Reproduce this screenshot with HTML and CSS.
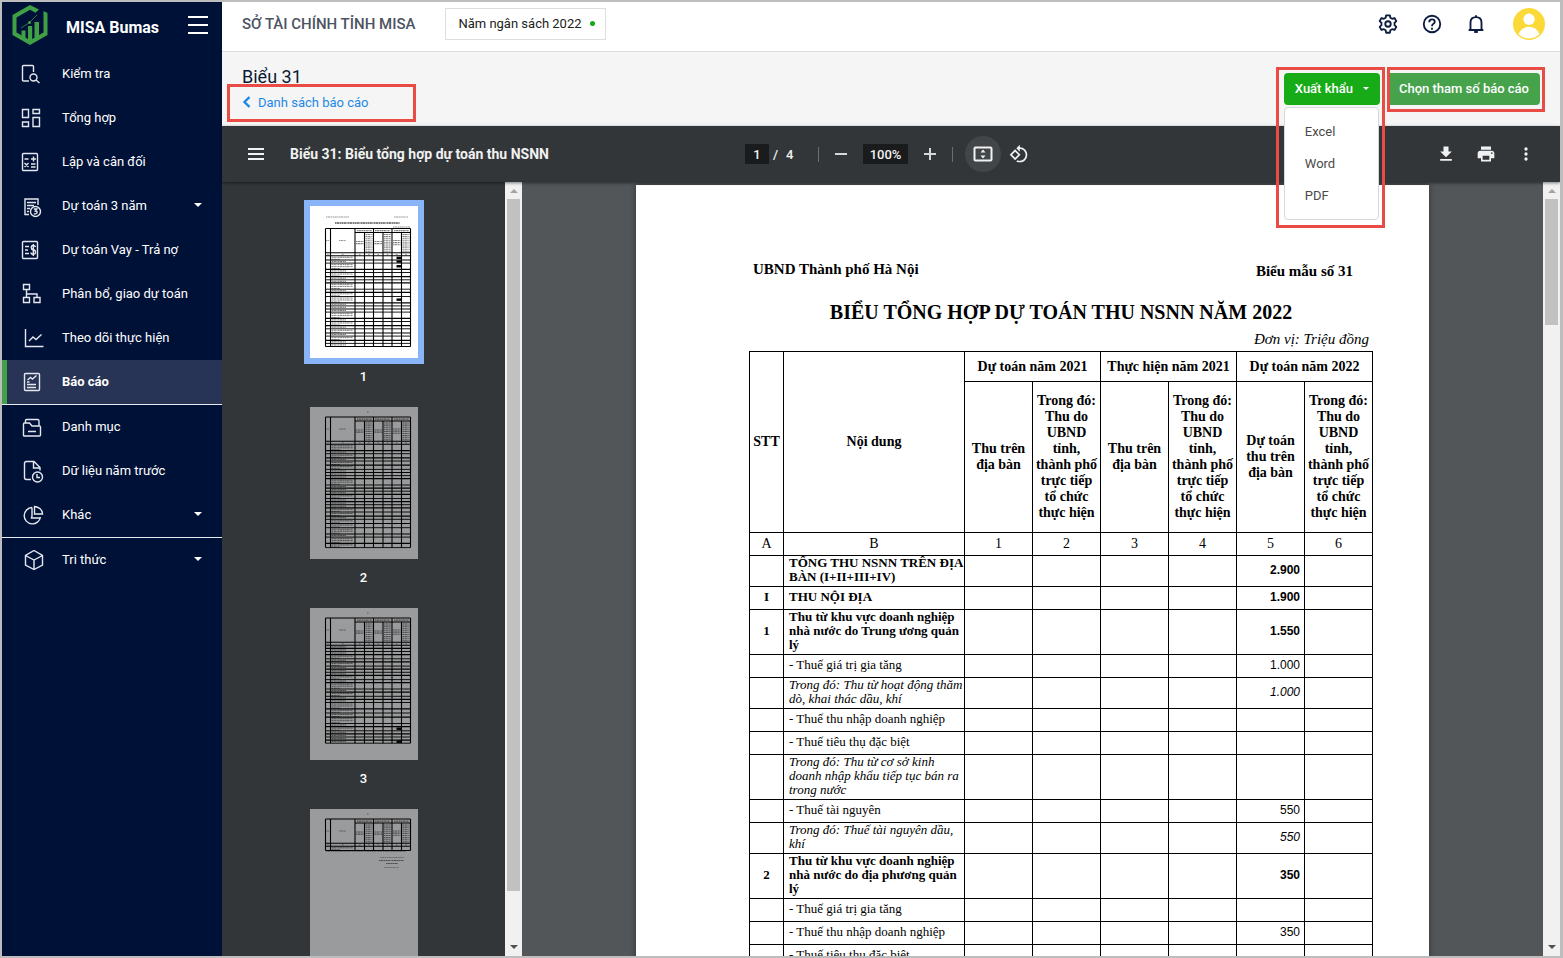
FILE: index.html
```html
<!DOCTYPE html>
<html lang="vi">
<head>
<meta charset="utf-8">
<title>MISA Bumas - Biểu 31</title>
<link rel="stylesheet" href="styles.css">
</head>
<body>
<div class="app">
  <aside class="sidebar">
    <div class="brand">
      <svg class="brand-logo" viewBox="0 0 36 40" width="36" height="40">
        <path d="M27 4.500 18 0 .5 10v20L18 40l17.500-10V8l-4 -2v21.500L18 35.300 4.500 27.500v-15L18 4.800l5.500 3z" fill="#3fa046"/>
        <path d="M9.500 25.500h4v8l-4-2.300zM16 21h4.200v14.500L18 37l-2-1.500zM22.500 17h4.500v14l-4.500 2.500z" fill="#3fa046"/>
        <path d="M9 23l8.500-5.500L25 10" fill="none" stroke="#2c7440" stroke-width="1"/>
        <circle cx="17.500" cy="17.500" r="1.500" fill="#3fa046"/>
      </svg>
      <span class="brand-name">MISA Bumas</span>
      <button class="icon-btn brand-menu" aria-label="Thu gọn"><svg viewBox="0 0 20 18" width="20" height="18"><path d="M0 1h20M0 9h20M0 17h20" stroke="#fff" stroke-width="2"/></svg></button>
    </div>
    <nav>
      <ul class="nav-group">
        <li><a class="nav-item" href="#"><svg viewBox="0 0 24 24"><path d="M10 19H4.500q-1 0-1-1V4.500q0-1 1-1h9q1 0 1 1V10"/><circle cx="14.500" cy="15.500" r="3.500"/><path d="M17 18l3.500 3"/></svg><span>Kiểm tra</span></a></li>
        <li><a class="nav-item" href="#"><svg viewBox="0 0 24 24"><path d="M3.500 3.500h6v8h-6zM14 3.500h6.500v4H14zM3.500 16h6v4.500h-6zM14 11.500h6.500v9H14z"/></svg><span>Tổng hợp</span></a></li>
        <li><a class="nav-item" href="#"><svg viewBox="0 0 24 24"><rect x="3.500" y="3.500" width="15" height="17" rx="1"/><path d="M5.500 9h4M12 9h5M14.500 6.500v5M5.500 13l4 4M9.500 13l-4 4M12 14h4.500M12 17h4.500"/></svg><span>Lập và cân đối</span></a></li>
        <li><a class="nav-item" href="#"><svg viewBox="0 0 24 24"><path d="M10 20.500H6V5h13v6M8 8.500h9M8 11.500h7M8 14.500h3M8 17.500h2"/><circle cx="16.500" cy="17.500" r="5"/><path d="M14.800 15h3l-1.500 2q2 0 1.800 1.500t-3.300 1.500"/></svg><span>Dự toán 3 năm</span><i class="caret"></i></a></li>
        <li><a class="nav-item" href="#"><svg viewBox="0 0 24 24"><rect x="3.500" y="3.500" width="15" height="17" rx="1"/><path d="M6 8.500h4M6 12h3M6 15.500h4M16.500 9q-.5-1.500-2.300-1.500-2 0-2 2t2 2.300q2.300.2 2.300 2.400t-2.300 2.100Q12 16.300 12 14.500M14.300 6v12"/></svg><span>Dự toán Vay - Trả nợ</span></a></li>
        <li><a class="nav-item" href="#"><svg viewBox="0 0 24 24"><path d="M4.500 2.500h6v5h-6zM4.500 15.500h6v5h-6zM15 15.500h6v5h-6zM7.500 7.500v8M7.500 12H18v3.500"/></svg><span>Phân bổ, giao dự toán</span></a></li>
        <li><a class="nav-item" href="#"><svg viewBox="0 0 24 24"><path d="M6.500 3v17.500h18M10 15l4-4 3 2.500 5.500-5"/></svg><span>Theo dõi thực hiện</span></a></li>
        <li><a class="nav-item active" href="#"><svg viewBox="0 0 24 24"><rect x="5.500" y="3.500" width="15" height="17" rx="1"/><path d="M8 12h2.500M8 14.500h9M8 17.500h9M8.500 10l3-2.500 2 1.500 4-3.500"/></svg><span>Báo cáo</span></a></li>
      </ul>
      <ul class="nav-group">
        <li><a class="nav-item" href="#"><svg viewBox="0 0 24 24"><path d="M6.500 8V5.500q0-1 1-1h11q1.500 0 1.500 1.500v5M4.500 20.500V9q0-1 1-1h5l2.500 3h7.500q1 0 1 1v8q0 1-1 1h-15q-1 0-1-.5zM9 16.500h8"/></svg><span>Danh mục</span></a></li>
        <li><a class="nav-item" href="#"><svg viewBox="0 0 24 24"><path d="M12 20.500H7.500q-2 0-2-2v-14q0-2 2-2H15l6 6v3M14.500 3v6H21"/><circle cx="18.500" cy="18" r="5"/><path d="M18 15v3.500h3"/></svg><span>Dữ liệu năm trước</span></a></li>
        <li><a class="nav-item" href="#"><svg viewBox="0 0 24 24"><path d="M13 4.500A8.200 8.200 0 1 0 21.500 14M13 4.500V13l-.5 2h9M15.500 3.500V11h8Q23 4.500 15.500 3.500z"/></svg><span>Khác</span><i class="caret"></i></a></li>
      </ul>
      <ul class="nav-group">
        <li><a class="nav-item" href="#"><svg viewBox="0 0 24 24"><path d="M15 2.500l8.500 5v9.500L15 21.500 6.500 17V7.500zM6.500 7.500L15 12l8.500-4.500M15 12v9.500"/></svg><span>Tri thức</span><i class="caret"></i></a></li>
      </ul>
    </nav>
  </aside>

  <main class="main">
    <header class="topbar">
      <span class="org">SỞ TÀI CHÍNH TỈNH MISA</span>
      <button class="year">Năm ngân sách 2022<i class="dot"></i></button>
      <div class="topbar-tools">
        <button class="icon-btn" aria-label="Thiết lập"><svg viewBox="0 0 24 24" width="22" height="22" fill="none" stroke="#0b1a40" stroke-width="2" stroke-linejoin="round"><path d="M10 2.500h4l.6 2.700 1.900 1.100 2.600-.8 2 3.400-2 1.900v2.400l2 1.900-2 3.400-2.600-.8-1.900 1.100-.6 2.700h-4l-.6-2.700-1.900-1.100-2.600.8-2-3.400 2-1.900v-2.400l-2-1.900 2-3.400 2.600.8 1.900-1.100z"/><circle cx="12" cy="12" r="3"/></svg></button>
        <button class="icon-btn" aria-label="Trợ giúp"><svg viewBox="0 0 24 24" width="22" height="22" fill="none" stroke="#0b1a40" stroke-width="2"><circle cx="12" cy="12" r="9"/><path d="M9 10q0-3 3-3t3 2.600q0 1.500-1.700 2.400-1.300.8-1.300 2.500"/><path d="M12 16v2.200"/></svg></button>
        <button class="icon-btn" aria-label="Thông báo"><svg viewBox="0 0 24 24" width="22" height="22" fill="none" stroke="#0b1a40" stroke-width="2"><path d="M4 18.500h16M6 18.500V10.500q0-6 6-6t6 6v8M12 2.500v2"/><path d="M10 20.500h4" stroke-width="2.500"/></svg></button>
        <button class="icon-btn avatar" aria-label="Tài khoản"><svg viewBox="0 0 32 32" width="32" height="32"><circle cx="16" cy="16" r="16" fill="#fad938"/><circle cx="16" cy="11.300" r="5.700" fill="#fff"/><path d="M5.500 26Q9 18.800 16 18.800T26.500 26Q22 30.500 16 30.500T5.500 26z" fill="#fff"/></svg></button>
      </div>
    </header>

    <section class="report-bar">
      <div class="report-title">
        <h1>Biểu 31</h1>
        <a class="back" href="#"><svg viewBox="0 0 9 12" width="9" height="12"><path d="M7.500 1l-5 5 5 5" fill="none" stroke="#1e88e5" stroke-width="2.400"/></svg>Danh sách báo cáo</a>
      </div>
      <div class="report-actions">
        <div class="export marked">
          <button class="btn btn-export">Xuất khẩu<i class="caret small"></i></button>
          <div class="menu">
            <button>Excel</button>
            <button>Word</button>
            <button>PDF</button>
          </div>
        </div>
        <div class="marked params"><button class="btn btn-params">Chọn tham số báo cáo</button></div>
      </div>
    </section>

    <section class="viewer">
      <div class="toolbar">
        <div class="tb-left">
          <button class="icon-btn" aria-label="Trình đơn"><svg viewBox="0 0 16 12" width="16" height="12"><path d="M0 1h16M0 6h16M0 11h16" stroke="#f1f1f1" stroke-width="2"/></svg></button>
          <span class="doc-name">Biểu 31: Biểu tổng hợp dự toán thu NSNN</span>
        </div>
        <div class="tb-center">
          <input class="field page-no" value="1" aria-label="Trang"><div class="pages"><span>/</span><span>4</span></div>
          <i class="sep"></i>
          <button class="icon-btn zoom" aria-label="Thu nhỏ"><svg viewBox="0 0 12 12" width="12" height="12"><path d="M0 6h12" stroke="#d8d8d8" stroke-width="2"/></svg></button>
          <input class="field zoom-level" value="100%" aria-label="Thu phóng">
          <button class="icon-btn zoom" aria-label="Phóng to"><svg viewBox="0 0 12 12" width="12" height="12"><path d="M0 6h12M6 0v12" stroke="#d8d8d8" stroke-width="2"/></svg></button>
          <i class="sep"></i>
          <button class="icon-btn fit" aria-label="Vừa trang"><svg viewBox="0 0 20 16" width="20" height="16"><rect x="1.500" y="1.500" width="17" height="13" rx="1" fill="none" stroke="#f1f1f1" stroke-width="2"/><path d="M10 3.500l2.500 3h-5zM10 12.500l2.500-3h-5z" fill="#f1f1f1"/></svg></button>
          <button class="icon-btn rotate" aria-label="Xoay"><svg viewBox="0 0 24 24" width="20" height="20" fill="#f1f1f1"><path d="M7.340 6.410L.86 12.900l6.490 6.480 6.490-6.480-6.500-6.490zM3.690 12.900l3.660-3.660L11 12.900l-3.660 3.660-3.650-3.660zm15.670-6.260A8.950 8.950 0 0 0 13 4V.76L8.760 5 13 9.240V6c1.790 0 3.580.68 4.950 2.050a7.007 7.007 0 0 1 0 9.900 6.973 6.973 0 0 1-7.790 1.440l-1.490 1.490C10.020 21.620 11.510 22 13 22c2.300 0 4.610-.88 6.360-2.640a8.980 8.980 0 0 0 0-12.720z"/></svg></button>
        </div>
        <div class="tb-right">
          <button class="icon-btn" aria-label="Tải xuống"><svg viewBox="0 0 24 24" width="20" height="20" fill="#f1f1f1"><path d="M19 9h-4V3H9v6H5l7 7 7-7zM5 18v2h14v-2H5z"/></svg></button>
          <button class="icon-btn" aria-label="In"><svg viewBox="0 0 24 24" width="20" height="20" fill="#f1f1f1"><path d="M19 8H5c-1.660 0-3 1.340-3 3v6h4v4h12v-4h4v-6c0-1.660-1.340-3-3-3zm-3 11H8v-5h8v5zm3-7c-.55 0-1-.45-1-1s.45-1 1-1 1 .45 1 1-.45 1-1 1zm-1-9H6v4h12V3z"/></svg></button>
          <button class="icon-btn" aria-label="Thêm"><svg viewBox="0 0 24 24" width="20" height="20" fill="#f1f1f1"><circle cx="12" cy="6" r="2"/><circle cx="12" cy="12" r="2"/><circle cx="12" cy="18" r="2"/></svg></button>
        </div>
      </div>

      <div class="panes">
        <div class="thumbs">
          <div class="thumb"><button class="thumb-page selected" data-page="1" aria-label="Trang 1"></button><span>1</span></div>
          <div class="thumb"><button class="thumb-page" data-page="2" aria-label="Trang 2"></button><span>2</span></div>
          <div class="thumb"><button class="thumb-page" data-page="3" aria-label="Trang 3"></button><span>3</span></div>
          <div class="thumb"><button class="thumb-page" data-page="4" aria-label="Trang 4"></button></div>
        </div>
        <div class="scroll"><i class="up"></i><div class="track"><div class="handle long"></div></div><i class="down"></i></div>

        <div class="doc">
          <article class="sheet">
            <div class="sheet-head"><span>UBND Thành phố Hà Nội</span><span class="form-no">Biểu mẫu số 31</span></div>
            <h2>BIỂU TỔNG HỢP DỰ TOÁN THU NSNN NĂM 2022</h2>
            <p class="unit">Đơn vị: Triệu đồng</p>
            <table>
              <colgroup><col class="c-no"><col class="c-name"><col span="6" class="c-val"></colgroup>
              <thead>
                <tr class="h1"><th rowspan="2">STT</th><th rowspan="2">Nội dung</th><th colspan="2">Dự toán năm 2021</th><th colspan="2">Thực hiện năm 2021</th><th colspan="2">Dự toán năm 2022</th></tr>
                <tr class="h2"><th>Thu trên địa bàn</th><th>Trong đó: Thu do UBND tỉnh, thành phố trực tiếp tổ chức thực hiện</th><th>Thu trên địa bàn</th><th>Trong đó: Thu do UBND tỉnh, thành phố trực tiếp tổ chức thực hiện</th><th>Dự toán thu trên địa bàn</th><th>Trong đó: Thu do UBND tỉnh, thành phố trực tiếp tổ chức thực hiện</th></tr>
                <tr class="idx"><td>A</td><td>B</td><td>1</td><td>2</td><td>3</td><td>4</td><td>5</td><td>6</td></tr>
              </thead>
              <tbody>
                <tr class="b"><td></td><td>TỔNG THU NSNN TRÊN ĐỊA BÀN (I+II+III+IV)</td><td></td><td></td><td></td><td></td><td>2.900</td><td></td></tr>
                <tr class="b"><td>I</td><td>THU NỘI ĐỊA</td><td></td><td></td><td></td><td></td><td>1.900</td><td></td></tr>
                <tr class="b"><td>1</td><td>Thu từ khu vực doanh nghiệp nhà nước do Trung ương quản lý</td><td></td><td></td><td></td><td></td><td>1.550</td><td></td></tr>
                <tr><td></td><td>- Thuế giá trị gia tăng</td><td></td><td></td><td></td><td></td><td>1.000</td><td></td></tr>
                <tr class="i"><td></td><td>Trong đó: Thu từ hoạt động thăm dò, khai thác dầu, khí</td><td></td><td></td><td></td><td></td><td>1.000</td><td></td></tr>
                <tr><td></td><td>- Thuế thu nhập doanh nghiệp</td><td></td><td></td><td></td><td></td><td></td><td></td></tr>
                <tr><td></td><td>- Thuế tiêu thụ đặc biệt</td><td></td><td></td><td></td><td></td><td></td><td></td></tr>
                <tr class="i"><td></td><td>Trong đó: Thu từ cơ sở kinh doanh nhập khẩu tiếp tục bán ra trong nước</td><td></td><td></td><td></td><td></td><td></td><td></td></tr>
                <tr><td></td><td>- Thuế tài nguyên</td><td></td><td></td><td></td><td></td><td>550</td><td></td></tr>
                <tr class="i"><td></td><td>Trong đó: Thuế tài nguyên dầu, khí</td><td></td><td></td><td></td><td></td><td>550</td><td></td></tr>
                <tr class="b"><td>2</td><td>Thu từ khu vực doanh nghiệp nhà nước do địa phương quản lý</td><td></td><td></td><td></td><td></td><td>350</td><td></td></tr>
                <tr><td></td><td>- Thuế giá trị gia tăng</td><td></td><td></td><td></td><td></td><td></td><td></td></tr>
                <tr><td></td><td>- Thuế thu nhập doanh nghiệp</td><td></td><td></td><td></td><td></td><td>350</td><td></td></tr>
                <tr><td></td><td>- Thuế tiêu thụ đặc biệt</td><td></td><td></td><td></td><td></td><td></td><td></td></tr>
              </tbody>
            </table>
          </article>
        </div>
        <div class="scroll"><i class="up"></i><div class="track"><div class="handle short"></div></div><i class="down"></i></div>
      </div>
    </section>
  </main>
</div>
<script src="thumbs.js"></script>
</body>
</html>
```
FILE: styles.css
```css
*, *::before, *::after { box-sizing: border-box; }
body { margin: 0; font-family: Roboto, "Noto Sans", sans-serif; font-size: 13px; color: #111; }
ul { list-style: none; margin: 0; padding: 0; }
button, input { font: inherit; color: inherit; }
button { cursor: pointer; }
.icon-btn { display: flex; align-items: center; justify-content: center; border: 0; padding: 0; background: none; }
.app { display: flex; height: 100vh; border: 2px solid #bdbdbd; border-right-width: 3px; overflow: hidden; }

/* Sidebar */
.sidebar { flex: 0 0 220px; background: #001137; color: #fff; }
.brand { display: flex; align-items: center; height: 50px; padding: 0 14px 4px 10px; }
.brand-name { flex: 1; padding: 5px 0 0 18px; font-size: 16px; font-weight: 700; }
.nav-group + .nav-group { border-top: 1px solid #e8eaf0; }
.nav-item { display: flex; align-items: center; height: 44px; padding: 0 20px 0 17px; color: #fff; text-decoration: none; }
.nav-item svg { width: 24px; height: 24px; margin-right: 19px; overflow: visible; fill: none; stroke: #e4e7ee; stroke-width: 1.4; }
.nav-item span { flex: 1; padding-bottom: 2px; }
.nav-item .caret { margin-bottom: 2px; }
.nav-item.active { background: #273455; box-shadow: inset 5px 0 #43a047; font-weight: 700; }
.caret { border: 4px solid transparent; border-top-color: currentColor; border-bottom: 0; }
.caret.small { border-width: 3px; border-bottom: 0; }

/* Header */
.main { flex: 1; min-width: 0; display: flex; flex-direction: column; }
.topbar { display: flex; align-items: center; height: 50px; padding: 0 15px 5px 20px; background: #fff; border-bottom: 1px solid #ddd; }
.org { font-size: 15px; font-weight: 500; color: #4c5362; }
.year { display: flex; align-items: center; gap: 8px; height: 32px; margin-left: 30px; padding: 0 10px 2px 12px; background: #fff; border: 1px solid #dcdfe2; color: #212121; }
.dot { width: 5px; height: 5px; border-radius: 50%; background: #15a915; }
.topbar-tools { display: flex; align-items: center; gap: 22px; margin-left: auto; }
.avatar { margin-left: 4px; }

/* Report bar */
.report-bar { display: flex; justify-content: space-between; height: 74px; padding: 0 20px; background: #f5f5f5; }
.report-title { padding-top: 14px; }
h1 { margin: 0; font-size: 18px; line-height: 22px; font-weight: 400; color: #0b1a33; }
.back { position: relative; display: flex; align-items: center; gap: 7px; height: 28px; color: #1e88e5; text-decoration: none; }
.back::after { content: ""; position: absolute; left: -15px; top: -4px; width: 189px; height: 38px; border: 3px solid #e94b45; }
.report-actions { display: flex; gap: 8px; padding-top: 21px; }
.marked { position: relative; height: 32px; }
.marked::after { content: ""; position: absolute; inset: -6px -5px -7px -8px; border: 3px solid #e94b45; pointer-events: none; z-index: 3; }
.export::after { bottom: -123px; }
.params::after { left: -1px; }
.btn { display: flex; align-items: center; justify-content: center; height: 32px; border: 0; border-radius: 4px; color: #fff; font-weight: 500; padding: 0 11px 2px; }
.btn-export { gap: 10px; background: #17ab17; }
.btn-params { background: #46a24b; border-radius: 0 4px 4px 0; }
.menu { position: absolute; z-index: 2; top: 34px; left: 0; right: 1px; padding: 7px 0 8px; background: #fff; border: 1px solid #d5d7da; border-radius: 4px; }
.menu button { display: block; width: 100%; height: 32px; padding: 0 20px; border: 0; background: none; text-align: left; color: #4a4a4a; }

/* Viewer toolbar */
.viewer { flex: 1; min-height: 0; display: flex; flex-direction: column; }
.toolbar { position: relative; z-index: 1; display: grid; grid-template-columns: 1fr auto 1fr; align-items: center; height: 56px; background: #323639; color: #f1f1f1; box-shadow: 0 1px 3px rgba(0, 0, 0, .5); }
.tb-left { display: flex; align-items: center; gap: 26px; padding-left: 26px; }
.doc-name { font-size: 14px; font-weight: 700; white-space: nowrap; }
.tb-center { display: flex; align-items: center; font-weight: 500; }
.field { height: 20px; padding: 0; border: 0; background: #191b1c; text-align: center; color: #f1f1f1; }
.page-no { width: 24px; }
.zoom-level { width: 45px; }
.pages { display: flex; gap: 8px; width: 49px; padding-left: 4px; }
.sep { width: 1px; height: 15px; background: #6b6e71; }
.zoom { width: 44px; }
.zoom + .sep { margin-right: 12px; }
.fit { width: 36px; height: 36px; border-radius: 50%; background: #424649; }
.rotate { width: 36px; }
.tb-right { display: flex; justify-content: flex-end; gap: 20px; padding-right: 24px; }

/* Panes */
.panes { flex: 1; min-height: 0; display: flex; background: #525659; }
.thumbs { flex: 0 0 283px; display: flex; flex-direction: column; align-items: center; gap: 31px; padding-top: 24px; overflow: hidden; background: #323639; color: #fff; }
.thumb { flex: none; display: flex; flex-direction: column; align-items: center; gap: 10px; height: 170px; font-weight: 500; line-height: 18px; }
.thumb-page { flex: none; display: block; width: 108px; height: 152px; padding: 0; border: 0; background: #9a9b9c; }
.thumb-page svg { display: block; }
.thumb-page.selected { background: #fff; box-shadow: 0 0 0 6px #8ab4f8; }
.scroll { flex: 0 0 17px; display: flex; flex-direction: column; align-items: center; background: #f1f1f1; padding: 7px 0; }
.up, .down { border: 4px solid transparent; }
.up { border-top: 0; border-bottom-color: #a3a3a3; }
.down { border-bottom: 0; border-top-color: #505050; }
.track { flex: 1; width: 13px; padding: 6px 0; }
.handle { background: #c1c1c1; }
.long { height: 93.5%; }
.short { height: 17%; }

/* Document */
.doc { flex: 1; min-width: 0; display: flex; justify-content: center; padding-top: 3px; overflow: hidden; }
.sheet { width: 793px; height: 1122px; padding: 74px 56px 0 113px; background: #fff; color: #000; box-shadow: 0 0 6px rgba(0, 0, 0, .4); font-family: "Liberation Serif", serif; }
.sheet-head { display: flex; justify-content: space-between; padding: 0 20px 0 4px; font-size: 15px; line-height: 20px; font-weight: 700; }
.form-no { padding-top: 2px; }
.sheet h2 { margin: 18px 0 0; font-size: 20px; line-height: 26px; text-align: center; white-space: nowrap; }
.unit { margin: 5px 0 0; padding-right: 4px; font-size: 15px; line-height: 18px; font-style: italic; text-align: right; }
table { width: 624px; margin-top: 3px; table-layout: fixed; border-spacing: 0; border: solid #000; border-width: 1px 0 0 1px; font-size: 13px; line-height: 14px; }
.c-no { width: 34px; }
.c-name { width: 181px; }
td, th { padding: 0; border: solid #000; border-width: 0 1px 1px 0; }
td { height: 23px; }
thead { font-size: 14px; line-height: 16px; }
.h1 th { height: 30px; }
.h2 th { height: 151px; padding: 0 2px; }
.idx td, td:first-child { text-align: center; }
tbody td { padding-bottom: 2px; }
tbody td:nth-child(2) { padding-left: 5px; }
tbody td:nth-child(n+3) { padding-right: 4px; font-family: "Liberation Sans", sans-serif; font-size: 12px; text-align: right; }
.b { font-weight: 700; }
.i { font-style: italic; }
```
FILE: thumbs.js
```js
// Draws a miniature of each report page: grid lines plus dashes for the text.
const NS = 'http://www.w3.org/2000/svg';
const COLS = [15.5, 20.5, 45, 54.5, 63.5, 73, 82, 91.5, 100.5];
const HEIGHT = { 1: 3.1, 2: 4.2, 3: 6.3 };
const PAGES = {
  1: { top: 22.5, rows: [2,1,3,1,2,1,1,3,1,2,3,1,1,1,3,1,2,1,2,1,2,1,1], totals: [0, 1, 2, 10] },
  2: { top: 10, rows: [3,1,2,1,2,2,1,1,1,3,1,1,1,2,1,1,1,2,2,1,2,2,3,1,3,2], totals: [] },
  3: { top: 10, rows: [1,1,1,2,1,2,1,1,1,2,1,3,1,2,1,1,3,2,2,3,1,2,1,1,1,1], totals: [21, 25] },
  4: { top: 10, rows: [2], totals: [] }
};

function add(svg, name, attrs) {
  const el = document.createElementNS(NS, name);
  for (const key in attrs) el.setAttribute(key, attrs[key]);
  svg.appendChild(el);
}
function line(svg, x1, y1, x2, y2, width = 1.1) {
  add(svg, 'line', { x1, y1, x2, y2, stroke: '#000', 'stroke-width': width });
}
function words(svg, x1, x2, y, weight = 0.8) {
  add(svg, 'line', { x1, y1: y, x2, y2: y, stroke: '#000', 'stroke-opacity': 0.5, 'stroke-width': weight, 'stroke-dasharray': '1.6 .4 2.4 .5 1.2 .4' });
}

document.querySelectorAll('.thumb-page').forEach(holder => {
  const page = PAGES[holder.dataset.page];
  const svg = document.createElementNS(NS, 'svg');
  svg.setAttribute('viewBox', '0 0 108 152');
  svg.setAttribute('width', 108);
  svg.setAttribute('height', 152);
  const left = COLS[0], right = COLS[8];
  if (holder.dataset.page === '1') {
    words(svg, 16, 39, 11);
    words(svg, 84, 98, 11);
    words(svg, 25, 90, 17, 1.8);
    words(svg, 83, 100, 21);
  } else {
    words(svg, 57, 59, 5);
  }
  let y = page.top;
  line(svg, left, y, right, y);
  line(svg, COLS[2], y + 4, right, y + 4);
  [47, 65, 84].forEach(x => words(svg, x, x + 15, y + 2.2, 1.2));
  words(svg, 16, 19, y + 12);
  words(svg, 29, 36, y + 12);
  for (let c = 2; c < 8; c++) {
    const tall = c % 2 === 1;
    const from = tall ? 6 : c === 6 ? 12 : 13;
    const to = tall ? 23 : c === 6 ? 17 : 16;
    for (let t = from; t < to; t += 2.1) words(svg, COLS[c] + 1, COLS[c + 1] - 1, y + t, 1.1);
  }
  y += 24.3;
  line(svg, left, y, right, y);
  for (let c = 0; c < 8; c++) {
    const mid = (COLS[c] + COLS[c + 1]) / 2;
    words(svg, mid - 0.8, mid + 0.8, y + 1.6);
  }
  y += 3;
  line(svg, left, y, right, y);
  page.rows.forEach((count, i) => {
    for (let k = 0; k < count; k++) {
      const end = k === count - 1 && count > 1 ? 30 : count === 1 ? 36 : 43;
      words(svg, 21.5, end, y + 1.5 + k * 2, 1);
    }
    if (page.totals.includes(i)) {
      add(svg, 'rect', { x: 86.5, y: y + HEIGHT[count] / 2 - 1.2, width: 5, height: 2.4 });
    }
    y += HEIGHT[count];
    line(svg, left, y, right, y, i % 2 ? 0.9 : 1.2);
  });
  COLS.forEach((x, c) => line(svg, x, c > 2 && c % 2 ? page.top + 4 : page.top, x, y));
  if (holder.dataset.page === '4') {
    words(svg, 16, 96, y + 1, 0.6);
    words(svg, 70, 94, y + 7, 0.6);
    words(svg, 69, 94, y + 10, 1.2);
    words(svg, 76, 88, y + 13, 1.2);
    words(svg, 74, 89, y + 17, 0.6);
  }
  holder.appendChild(svg);
});
```
